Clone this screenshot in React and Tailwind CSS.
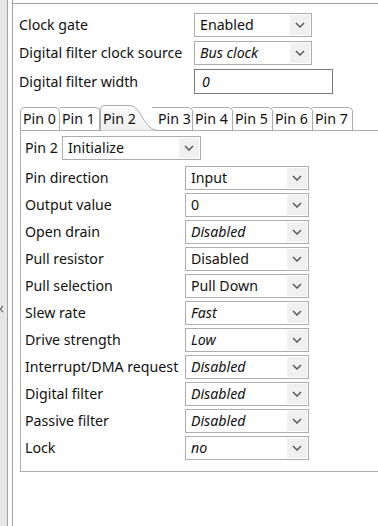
import React from 'react';

const Chevron = () => (
    <svg width="10" height="6" viewBox="0 0 10 6" fill="none">
        <path d="M1 1 L5 5 L9 1" stroke="#5a5a5a" strokeWidth="1.5" />
    </svg>
);

const Select = ({ value, italic, className }) => (
    <div className={`flex h-[24px] border border-[#adadad] bg-white ${className}`}>
        <span className={`flex-1 pl-[5px] leading-[22px] whitespace-nowrap ${italic ? 'italic' : ''}`}>{value}</span>
        <div className="w-[20px] my-[1px] mr-[1px] bg-[#f0f0f0] flex items-center justify-center">
            <Chevron />
        </div>
    </div>
);

const pinRows = [
    ["Pin direction", "Input", false],
    ["Output value", "0", false],
    ["Open drain", "Disabled", true],
    ["Pull resistor", "Disabled", false],
    ["Pull selection", "Pull Down", false],
    ["Slew rate", "Fast", true],
    ["Drive strength", "Low", true],
    ["Interrupt/DMA request", "Disabled", true],
    ["Digital filter", "Disabled", true],
    ["Passive filter", "Disabled", true],
    ["Lock", "no", true],
];

const Tab = ({ label, first, className = "" }) => (
    <div className={`h-[23px] border-t border-r border-[#acacac] rounded-tr-[5px] bg-white leading-[21px] whitespace-nowrap overflow-hidden ${first ? 'border-l rounded-tl-[5px]' : ''} ${className}`}>
        {label}
    </div>
);

const App = () => {
    return (
        <div
            className="w-[378px] h-[526px] flex bg-white overflow-hidden text-[14.2px] text-[#111]"
            style={{ fontFamily: '"Noto Sans", "Open Sans", sans-serif' }}
        >
            {/* left splitter strip */}
            <div className="w-[8px] shrink-0 bg-[#e6e6e6] border-r border-[#a0a0a0] pt-[305px]">
                <svg width="3" height="8" viewBox="0 0 3 8" fill="none">
                    <path d="M3 0.5 L0.5 4 L3 7.5" stroke="#333" strokeWidth="1" />
                </svg>
            </div>
            <div className="w-[5px] shrink-0 border-r border-[#a0a0a0]" />

            <div className="flex-1 min-w-0 pt-[3px]">
                <div className="border-t border-[#a0a0a0] pt-[9px]">
                    {/* general settings */}
                    <div className="flex flex-col gap-[4px] pl-[6px]">
                        <div className="flex items-center">
                            <span className="w-[175px]">Clock gate</span>
                            <Select value="Enabled" className="w-[118px]" />
                        </div>
                        <div className="flex items-center">
                            <span className="w-[175px]">Digital filter clock source</span>
                            <Select value="Bus clock" italic className="w-[118px]" />
                        </div>
                        <div className="flex items-center">
                            <span className="w-[175px]">Digital filter width</span>
                            <div className="w-[139px] h-[25px] border border-[#7a7a7a] pl-[7px] leading-[23px] italic">0</div>
                        </div>
                    </div>

                    {/* pin tabs */}
                    <div className="ml-[7px] mt-[11px] w-[400px]">
                        <div className="flex items-end h-[25px]">
                            <Tab label="Pin 0" first className="w-[40px] pl-[2px]" />
                            <Tab label="Pin 1" className="w-[40px] pl-[2px]" />
                            <div className="relative w-[52px] h-[25px] z-10 whitespace-nowrap">
                                <svg className="absolute left-0 top-0" width="60" height="26" viewBox="0 0 60 26" fill="none">
                                    <defs>
                                        <linearGradient id="selTab" x1="0" y1="0" x2="0" y2="1">
                                            <stop offset="0" stopColor="#fbfbfb" />
                                            <stop offset="1" stopColor="#efefef" />
                                        </linearGradient>
                                    </defs>
                                    <path
                                        d="M0.5 26 L0.5 4 Q0.5 0.5 4 0.5 L29 0.5 C35 0.5 37 4 41 10 C46 18 49 24.5 58 25.5 L58 26 Z"
                                        fill="url(#selTab)"
                                        stroke="#acacac"
                                    />
                                </svg>
                                <span className="relative pl-[3px] leading-[27px]">Pin 2</span>
                            </div>
                            <Tab label="Pin 3" className="w-[41px] pl-[6px]" />
                            <Tab label="Pin 4" className="w-[40px] pl-[2px]" />
                            <Tab label="Pin 5" className="w-[40px] pl-[2px]" />
                            <Tab label="Pin 6" className="w-[40px] pl-[2px]" />
                            <Tab label="Pin 7" className="w-[40px] pl-[2px]" />
                        </div>
                        <div className="border border-[#acacac] pt-[5px] pb-[11px] pl-[4px]">
                            <div className="flex items-center">
                                <span className="w-[37px]">Pin 2</span>
                                <Select value="Initialize" className="w-[139px]" />
                            </div>
                            <div className="flex flex-col gap-[3px] mt-[6px]">
                                {pinRows.map(([label, value, italic]) => (
                                    <div key={label} className="flex items-center">
                                        <span className="w-[160px] whitespace-nowrap">{label}</span>
                                        <Select value={value} italic={italic} className="w-[124px]" />
                                    </div>
                                ))}
                            </div>
                        </div>
                    </div>
                </div>
            </div>
        </div>
    );
};

export default App;
